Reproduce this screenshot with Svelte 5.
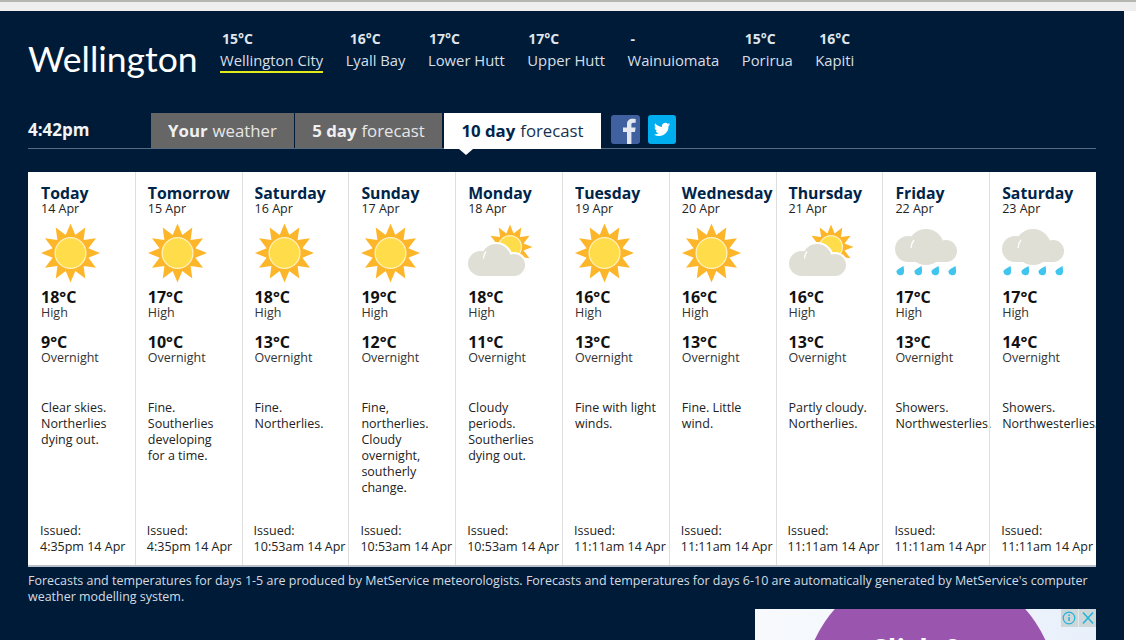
<script>
	const places = [
		{ temp: '15°C', name: 'Wellington City', nudge: 2, active: true },
		{ temp: '16°C', name: 'Lyall Bay', nudge: 4 },
		{ temp: '17°C', name: 'Lower Hutt', nudge: 1 },
		{ temp: '17°C', name: 'Upper Hutt', nudge: 1 },
		{ temp: '-', name: 'Wainuiomata', nudge: 3 },
		{ temp: '15°C', name: 'Porirua', nudge: 3 },
		{ temp: '16°C', name: 'Kapiti', nudge: 4 }
	];

	const days = [
		{ day: 'Today', date: '14 Apr', icon: 'sun', high: 18, low: 9, text: 'Clear skies. Northerlies dying out.', issued: '4:35pm 14 Apr' },
		{ day: 'Tomorrow', date: '15 Apr', icon: 'sun', high: 17, low: 10, text: 'Fine. Southerlies developing for a time.', issued: '4:35pm 14 Apr' },
		{ day: 'Saturday', date: '16 Apr', icon: 'sun', high: 18, low: 13, text: 'Fine. Northerlies.', issued: '10:53am 14 Apr' },
		{ day: 'Sunday', date: '17 Apr', icon: 'sun', high: 19, low: 12, text: 'Fine, northerlies. Cloudy overnight, southerly change.', issued: '10:53am 14 Apr' },
		{ day: 'Monday', date: '18 Apr', icon: 'partly', high: 18, low: 11, text: 'Cloudy periods. Southerlies dying out.', issued: '10:53am 14 Apr' },
		{ day: 'Tuesday', date: '19 Apr', icon: 'sun', high: 16, low: 13, text: 'Fine with light winds.', issued: '11:11am 14 Apr' },
		{ day: 'Wednesday', date: '20 Apr', icon: 'sun', high: 16, low: 13, text: 'Fine. Little wind.', issued: '11:11am 14 Apr' },
		{ day: 'Thursday', date: '21 Apr', icon: 'partly', high: 16, low: 13, text: 'Partly cloudy. Northerlies.', issued: '11:11am 14 Apr' },
		{ day: 'Friday', date: '22 Apr', icon: 'rain', high: 17, low: 13, text: 'Showers. Northwesterlies.', issued: '11:11am 14 Apr' },
		{ day: 'Saturday', date: '23 Apr', icon: 'rain', high: 17, low: 14, text: 'Showers. Northwesterlies.', issued: '11:11am 14 Apr' }
	];

	// sun rays: star polygon around a centre
	function star(cx, cy, outer, inner) {
		const pts = [];
		for (let i = 0; i < 24; i++) {
			const r = i % 2 === 0 ? outer : inner;
			const a = (i * Math.PI) / 12 - Math.PI / 2;
			pts.push(`${(cx + r * Math.cos(a)).toFixed(1)},${(cy + r * Math.sin(a)).toFixed(1)}`);
		}
		return pts.join(' ');
	}

	const drops = [1, 19, 36, 53];
</script>

<div class="chrome"></div>
<main class="page">
	<header class="top">
		<h1>Wellington</h1>
		<ul class="places">
			{#each places as p}
				<li>
					<b style="margin-left: {p.nudge}px">{p.temp}</b>
					<a href="#top" class:active={p.active}>{p.name}</a>
				</li>
			{/each}
		</ul>
	</header>

	<div class="tabbar">
		<span class="time">4:42pm</span>
		<nav class="tabs">
			<a href="#top" class="tab tab-a"><b>Your</b> weather</a>
			<a href="#top" class="tab tab-b"><b>5 day</b> forecast</a>
			<a href="#top" class="tab tab-c current"><b>10 day</b> forecast</a>
		</nav>
		<a href="#top" class="social fb" aria-label="Facebook">
			<svg viewBox="0 0 28 29" width="29" height="29"><path d="M15.5 29V17h-4v-4.600h4V9.300C15.500 5.600 17.700 3.700 21 3.700c1.500 0 2.800.1 3.200.2v3.900h-2.200c-1.800 0-2.100.8-2.100 2.100v2.500h4.200l-.6 4.600h-3.600V29z" fill="#e4e8f1"/></svg>
		</a>
		<a href="#top" class="social tw" aria-label="Twitter">
			<svg viewBox="-1.500 -1 31 32" width="28" height="29"><path d="M23 9.200c-.7.300-1.400.5-2.100.6.800-.5 1.300-1.200 1.600-2-.7.400-1.500.7-2.300.9a3.700 3.700 0 0 0-6.300 3.400c-3-.2-5.700-1.600-7.500-3.900-1 1.700-.5 3.800 1.100 4.900-.6 0-1.200-.2-1.700-.5 0 1.800 1.300 3.300 3 3.700-.5.100-1.100.2-1.700.1.500 1.500 1.800 2.500 3.400 2.600A7.400 7.400 0 0 1 5 20.500a10.500 10.500 0 0 0 16.200-9.300c.7-.5 1.300-1.200 1.800-2z" fill="#fff"/></svg>
		</a>
	</div>

	<section class="grid">
		{#each days as d}
			<article class="col">
				<h2>{d.day}</h2>
				<div class="date">{d.date}</div>
				<div class="icon">
					{#if d.icon === 'sun'}
						<svg viewBox="0 0 66 60" width="66" height="60">
							<polygon points={star(29.5, 29, 29.5, 18.5)} fill="#fdb62a" />
							<circle cx="29.500" cy="29" r="16" fill="#fff3c4" />
							<circle cx="29.500" cy="29" r="14.800" fill="#ffdc4a" />
						</svg>
					{:else if d.icon === 'partly'}
						<svg viewBox="0 0 66 60" width="66" height="60">
							<polygon points={star(42, 23, 22.5, 14)} fill="#fdb62a" />
							<circle cx="42" cy="23" r="12" fill="#fff3c4" />
							<circle cx="42" cy="23" r="10.800" fill="#ffdc4a" />
							<circle cx="28" cy="35" r="17" fill="#fff" />
							<circle cx="46" cy="41" r="13" fill="#fff" />
							<g fill="#dfdfd6">
								<circle cx="12.500" cy="39.500" r="12.500" />
								<circle cx="28" cy="35" r="15" />
								<circle cx="46" cy="41" r="11" />
								<rect x="12.500" y="38" width="33.500" height="14" />
							</g>
							<path d="M15.500 34.500c.2-3 .9-5 2.500-7" stroke="#fff" stroke-width="1.300" fill="none" />
						</svg>
					{:else}
						<svg viewBox="0 0 66 60" width="66" height="60">
							<g fill="#dfdfd6">
								<circle cx="13" cy="25" r="13" />
								<circle cx="31" cy="23" r="18" />
								<circle cx="51" cy="27" r="11" />
								<rect x="13" y="24" width="38" height="14" />
							</g>
							<path d="M16 24c.3-3 1.200-6 3-8" stroke="#fff" stroke-width="1.300" fill="none" />
							{#each drops as x}
								<path d="M{x + 7.5} 42C{x + 8} 45 {x + 8.500} 47 {x + 7.5} 50A4.200 4.200 0 0 1 {x + 0.3} 47.500C{x + 1} 45.500 {x + 4} 44 {x + 7.5} 42z" fill="#3fc5ee" />
							{/each}
						</svg>
					{/if}
				</div>
				<div class="temp">{d.high}°C</div>
				<div class="label">High</div>
				<div class="temp low">{d.low}°C</div>
				<div class="label">Overnight</div>
				<p class="desc">{d.text}</p>
				<div class="issued">Issued:<br />{d.issued}</div>
			</article>
		{/each}
	</section>

	<p class="note">Forecasts and temperatures for days 1-5 are produced by MetService meteorologists. Forecasts and temperatures for days 6-10 are automatically generated by MetService's computer weather modelling system.</p>

	<aside class="ad">
		<div class="blob"></div>
		<span class="ad-text">Click &amp;</span>
		<div class="ad-badge">
			<svg viewBox="0 0 35 18" width="35" height="18">
				<circle cx="8" cy="9" r="5.800" fill="none" stroke="#22b3d6" stroke-width="1.200" />
				<rect x="7.300" y="8" width="1.500" height="4" fill="#22b3d6" />
				<rect x="7.300" y="5.500" width="1.500" height="1.500" fill="#22b3d6" />
				<path d="M22 3.500l10 11M32 3.500l-10 11" stroke="#22b3d6" stroke-width="1.500" />
				<rect x="17" y="0" width="1" height="18" fill="#e4eaec" />
			</svg>
		</div>
	</aside>
</main>

<style>
	:global(body) { background: #fff; font-family: "Open Sans", "Liberation Sans", sans-serif; }
	.chrome { height: 9px; background: #eeeeee; border-top: 2px solid #b5b5b1; }
	.page { width: 1124px; height: 629px; box-sizing: border-box; padding: 0 28px; background: #001b38; color: #fff; overflow: hidden; }

	.top { display: flex; align-items: flex-start; height: 102px; box-sizing: border-box; padding-top: 19px; }
	h1 { margin: 7px 0 0 0; width: 192px; font-family: Lato, "Open Sans", sans-serif; font-weight: 400; font-size: 35.500px; line-height: 44px; }
	.places { display: flex; gap: 22.500px; margin: 0; padding: 0; list-style: none; }
	.places li { display: flex; flex-direction: column; align-items: flex-start; }
	.places b { font-size: 14px; line-height: 18px; color: #dfe5ea; }
	.places a { margin-top: 3px; padding-bottom: 1px; font-size: 14.800px; line-height: 19px; color: #d8dfe6; text-decoration: none; border-bottom: 2px solid transparent; }
	.places a.active { border-bottom-color: #e3ea1c; }

	.tabbar { display: flex; align-items: flex-start; height: 36px; box-sizing: border-box; border-bottom: 1.500px solid #566c82; }
	.time { width: 123px; margin-top: 7px; font-weight: 700; font-size: 17px; line-height: 20px; color: #f2f4f6; }
	.tabs { display: flex; gap: 1px; }
	.tab { height: 35px; box-sizing: border-box; display: flex; align-items: center; justify-content: center; gap: 5px; background: #666; color: #e6e6e6; font-size: 16.800px; text-decoration: none; }
	.tab b { color: #f0f0f0; }
	.tab-a { width: 143px; }
	.tab-b { width: 147px; }
	.tab-c { width: 157px; margin-left: 1px; }
	.current { position: relative; height: 36px; padding-bottom: 1px; background: #fff; color: #16314e; }
	.current b { color: #00254a; }
	.current::after { content: ""; position: absolute; left: 15px; top: 36px; border: 7px solid transparent; border-top: 6px solid #fff; border-bottom: 0; }
	.social { display: block; width: 28px; height: 29px; margin-top: 2px; border-radius: 3px; overflow: hidden; }
	.fb { width: 29px; margin-left: 10px; background: #41609f; }
	.tw { margin-left: 8px; background: #00aeef; }

	.grid { display: grid; grid-template-columns: repeat(10, 106.800px); margin-top: 23px; height: 395px; box-sizing: border-box; background: #fff; border-bottom: 2px solid #b9c2cb; overflow: hidden; color: #222; }
	.col { display: flex; flex-direction: column; min-width: 0; padding: 12px 0 10px 12px; box-sizing: border-box; border-left: 1.500px solid #dedede; }
	.col:first-child { border-left-color: transparent; }
	h2 { margin: 0; font-size: 15.800px; line-height: 19px; font-weight: 700; color: #00254a; white-space: nowrap; }
	.date { font-size: 12.500px; line-height: 12px; color: #222; }
	.icon { height: 60px; margin-top: 9px; }
	.icon svg { display: block; }
	.temp { margin-top: 3px; font-size: 16px; line-height: 20px; font-weight: 700; color: #111; }
	.low { margin-top: 13px; }
	.label { font-size: 12.500px; line-height: 12px; color: #333; }
	.desc { flex: 1; width: 82px; margin: 36px 0 0 0; font-size: 12.500px; line-height: 16px; color: #222; }
	.issued { margin-left: -1px; font-size: 12.500px; line-height: 16px; color: #222; white-space: nowrap; }

	.note { margin: 6px 0 0 0; width: 1068px; font-size: 12.480px; line-height: 16px; color: #d5dbe1; }

	.ad { position: relative; height: 40px; width: 341px; margin: 4px 0 0 727px; background: linear-gradient(90deg, #f8fafd, #e8f0fb); overflow: hidden; }
	.blob { position: absolute; left: 48px; top: -43px; width: 254px; height: 254px; border-radius: 50%; background: #9a56ae; }
	.ad-text { position: absolute; left: 0; right: 16px; top: 23px; text-align: center; color: #fff; font-weight: 700; font-size: 28px; line-height: 34px; }
	.ad-badge { position: absolute; right: 0; top: 0; height: 18px; background: #cdd6d9; }
	.ad-badge svg { display: block; }
</style>
